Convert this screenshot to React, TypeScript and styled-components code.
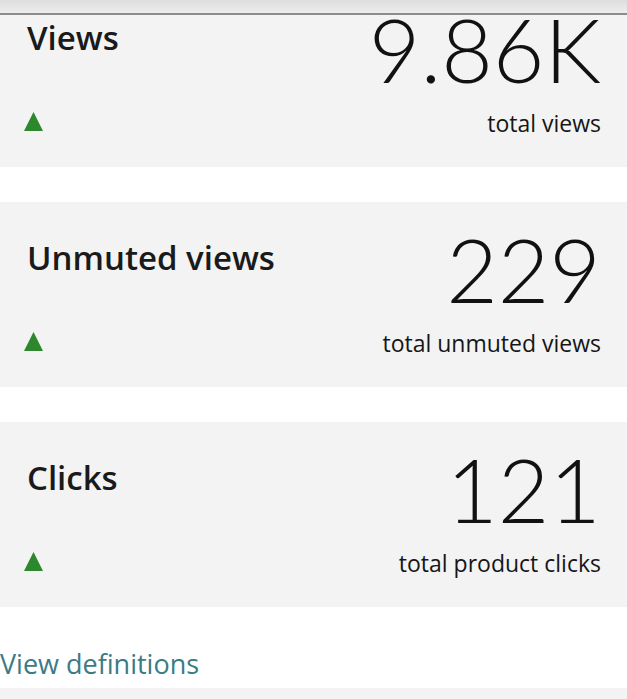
import React from "react";
import styled, { createGlobalStyle } from "styled-components";

const GlobalStyle = createGlobalStyle`
  html, body { margin: 0; padding: 0; background: #ffffff; }
  body { font-family: "Open Sans", "Noto Sans", sans-serif; color: #111; }
  * { box-sizing: border-box; }
`;

const Page = styled.div`
  height: 699px;
  display: flex;
  flex-direction: column;
  overflow: hidden;
`;

const TopBar = styled.div`
  height: 15px;
  flex: none;
  background: linear-gradient(#dedede, #ececec);
  border-bottom: 2px solid #8b8b8b;
`;

const Viewport = styled.div`
  flex: 1;
  overflow: hidden;
  display: flex;
  flex-direction: column;
`;

const List = styled.div`
  margin-top: -33px;
  display: flex;
  flex-direction: column;
  gap: 35px;
`;

const Card = styled.section`
  height: 185px;
  background: #f3f3f3;
  padding: 0 26px 0 27px;
  display: grid;
  grid-template-columns: 1fr auto;
  grid-template-rows: 126px 40px;
  align-items: start;
`;

const Title = styled.h2`
  margin: 0;
  padding-top: 36px;
  font-size: 33px;
  font-weight: 600;
  line-height: 40px;
  color: #1a1a1a;
  white-space: nowrap;
`;

const Value = styled.div`
  font-family: "Lato", "Open Sans", sans-serif;
  font-weight: 300;
  font-size: 89px;
  line-height: 110px;
  padding-top: 12px;
  text-align: right;
  color: #111;
`;

const Trend = styled.svg`
  width: 19px;
  height: 19px;
  margin-left: -3px;
  margin-top: 4px;
`;

const Caption = styled.div`
  font-size: 23px;
  line-height: 30px;
  text-align: right;
  color: #161616;
  white-space: nowrap;
`;

const Footer = styled.div`
  flex: 1;
  display: flex;
  flex-direction: column;
`;

const LinkRow = styled.div`
  height: 81px;
  display: flex;
  align-items: center;
  padding-top: 32px;
`;

const DefinitionsLink = styled.a`
  font-size: 27px;
  color: #3b7b84;
  text-decoration: none;
  line-height: 30px;
`;

const BottomStrip = styled.div`
  flex: 1;
  background: #f3f3f3;
`;

const metrics = [
  { title: "Views", value: "9.86K", caption: "total views" },
  { title: "Unmuted views", value: "229", caption: "total unmuted views" },
  { title: "Clicks", value: "121", caption: "total product clicks" },
];

export default function App() {
  return (
    <>
      <GlobalStyle />
      <Page>
        <TopBar />
        <Viewport>
          <List>
            {metrics.map((m) => (
              <Card key={m.title}>
                <Title>{m.title}</Title>
                <Value>{m.value}</Value>
                <Trend viewBox="0 0 19 19">
                  <polygon points="9.5,0 19,19 0,19" fill="#2d882d" />
                </Trend>
                <Caption>{m.caption}</Caption>
              </Card>
            ))}
          </List>
          <Footer>
            <LinkRow>
              <DefinitionsLink href="#">View definitions</DefinitionsLink>
            </LinkRow>
            <BottomStrip />
          </Footer>
        </Viewport>
      </Page>
    </>
  );
}
